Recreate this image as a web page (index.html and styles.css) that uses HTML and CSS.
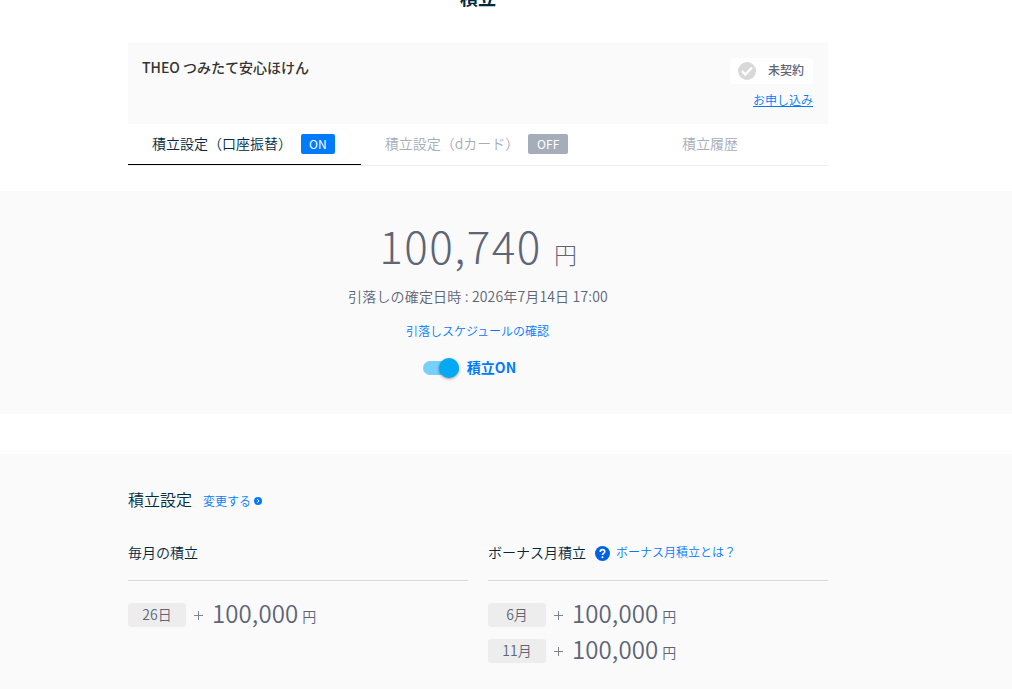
FILE: index.html
```html
<!DOCTYPE html>
<html lang="ja">
<head>
    <meta charset="UTF-8">
    <meta name="viewport" content="width=device-width, initial-scale=1.0">
    <title>積立</title>
    <link rel="stylesheet" href="styles.css">
</head>
<body>
    <header class="container">
        <h1 class="page-title">積立</h1>

        <section class="insurance">
            <h2 class="insurance-name">THEO つみたて安心ほけん</h2>
            <div class="insurance-status">
                <span class="status-box">
                    <svg class="status-icon" viewBox="0 0 18 18">
                        <circle cx="9" cy="9" r="9" fill="#d8d8d8"/>
                        <path d="M3.9 9.2l3.5 3.3 6.5-7" fill="none" stroke="#fff" stroke-width="2.3"/>
                    </svg>
                    <span class="status-text">未契約</span>
                </span>
                <a href="#" class="apply-link">お申し込み</a>
            </div>
        </section>

        <nav class="tabs">
            <a class="tab tab-active"><span>積立設定（口座振替）</span><span class="badge badge-on">ON</span></a>
            <a class="tab"><span>積立設定（dカード）</span><span class="badge">OFF</span></a>
            <a class="tab">積立履歴</a>
        </nav>
    </header>

    <section class="summary">
        <div class="container summary-inner">
            <p class="total"><span class="total-number">100,740</span><span class="total-unit">円</span></p>
            <p class="fixed-date">引落しの確定日時 : 2026年7月14日 17:00</p>
            <a class="schedule-link">引落しスケジュールの確認</a>
            <div class="switch">
                <span class="switch-track"><span class="switch-thumb"></span></span>
                <span class="switch-label">積立ON</span>
            </div>
        </div>
    </section>

    <section class="settings">
        <div class="container">
            <div class="settings-head">
                <h2 class="settings-title">積立設定</h2>
                <a class="change-link">変更する</a>
                <svg class="change-icon" viewBox="0 0 8 8">
                    <circle cx="4" cy="4" r="4" fill="#007bff"/>
                    <path d="M3.2 2.2L5 4 3.2 5.8" fill="none" stroke="#fff" stroke-width="1"/>
                </svg>
            </div>

            <div class="columns">
                <div class="column">
                    <div class="column-head">
                        <h3 class="column-title">毎月の積立</h3>
                    </div>
                    <div class="row">
                        <span class="day">26日</span>
                        <svg class="plus" viewBox="0 0 9 9"><path d="M0 4.5h9M4.5 0v9" stroke="#7c8391"/></svg>
                        <span class="amount">100,000</span>
                        <span class="unit">円</span>
                    </div>
                </div>

                <div class="column">
                    <div class="column-head">
                        <h3 class="column-title">ボーナス月積立</h3>
                        <svg class="help-icon" viewBox="0 0 15 15">
                            <circle cx="7.5" cy="7.5" r="7.5" fill="#0061e6"/>
                            <path d="M5.2 5.9C5.2 4.4 6.1 3.6 7.5 3.6S9.8 4.4 9.8 5.7C9.8 7.2 7.5 7.3 7.5 9.1" fill="none" stroke="#fff" stroke-width="1.6"/>
                            <circle cx="7.5" cy="11.3" r="1" fill="#fff"/>
                        </svg>
                        <a class="help-link">ボーナス月積立とは？</a>
                    </div>
                    <div class="row">
                        <span class="day">6月</span>
                        <svg class="plus" viewBox="0 0 9 9"><path d="M0 4.5h9M4.5 0v9" stroke="#7c8391"/></svg>
                        <span class="amount">100,000</span>
                        <span class="unit">円</span>
                    </div>
                    <div class="row">
                        <span class="day">11月</span>
                        <svg class="plus" viewBox="0 0 9 9"><path d="M0 4.5h9M4.5 0v9" stroke="#7c8391"/></svg>
                        <span class="amount">100,000</span>
                        <span class="unit">円</span>
                    </div>
                </div>
            </div>
        </div>
    </section>
</body>
</html>
```
FILE: styles.css
```css
* {
    box-sizing: border-box;
}

body {
    margin: 0;
    height: 689px;
    overflow: hidden;
    background-color: #fff;
    color: #5d6576;
    font-family: "Noto Sans CJK JP", sans-serif;
    font-size: 14px;
    font-weight: 350;
    line-height: 20px;
}

h1, h2, h3, p {
    margin: 0;
    font-weight: inherit;
}

.container {
    width: 700px;
    margin-left: 128px;
}

.page-title {
    height: 58px;
    margin-top: -15px;
    color: #002840;
    font-size: 18px;
    font-weight: 700;
    line-height: 24px;
    text-align: center;
}

/* insurance box */
.insurance {
    display: flex;
    justify-content: space-between;
    height: 81px;
    padding: 14px 15px 0 14px;
    background-color: #fafafa;
}

.insurance-name {
    color: #333;
    font-size: 14px;
    font-weight: 500;
}

.insurance-status {
    display: flex;
    flex-direction: column;
    align-items: flex-end;
    padding-top: 1px;
}

.status-box {
    display: flex;
    align-items: center;
    width: 83px;
    height: 26px;
    padding-left: 8px;
    border-radius: 4px;
    background-color: #fff;
}

.status-icon {
    width: 18px;
    height: 18px;
}

.status-text {
    margin-left: 12px;
    font-size: 12px;
    font-weight: 500;
    line-height: 22px;
    padding-bottom: 2px;
}

.apply-link {
    margin-top: 6px;
    color: #007bff;
    font-size: 12px;
    text-decoration: underline;
}

/* tabs */
.tabs {
    display: grid;
    grid-template-columns: 233px 234px 233px;
    height: 42px;
    border-bottom: 1px solid #eee;
}

.tab {
    display: flex;
    justify-content: center;
    height: 41px;
    padding: 9px 3px 0 0;
    color: #a6adba;
}

.tab-active {
    padding-right: 2px;
    border-bottom: 1px solid #000;
    color: #002840;
}

.badge {
    width: 40px;
    height: 20px;
    margin: 1px 0 0 9px;
    border-radius: 2px;
    background-color: #a6adba;
    color: #fff;
    font-size: 12px;
    font-weight: 400;
    line-height: 19px;
    letter-spacing: 0.2px;
    text-align: center;
}

.badge-on {
    width: 34px;
    background-color: #007bff;
}

/* summary */
.summary {
    height: 223px;
    margin-top: 25px;
    background-color: #fafafa;
}

.summary-inner {
    display: flex;
    flex-direction: column;
    align-items: center;
    padding-top: 30px;
}

.total {
    display: flex;
    align-items: baseline;
    height: 65px;
    line-height: 49px;
}

.total-number {
    font-size: 44px;
    font-weight: 300;
    letter-spacing: 1.5px;
}

.total-unit {
    margin-left: 12px;
    font-size: 23px;
    font-weight: 300;
}

.fixed-date {
    letter-spacing: 0.16px;
}

.schedule-link {
    margin-top: 15px;
    margin-right: 1px;
    color: #007bff;
    font-size: 12px;
}

.switch {
    display: flex;
    align-items: center;
    margin-top: 17px;
    margin-right: 17px;
}

.switch-track {
    display: flex;
    align-items: center;
    justify-content: flex-end;
    width: 36px;
    height: 14px;
    border-radius: 7px;
    background-color: #76d0f8;
}

.switch-thumb {
    width: 20px;
    height: 20px;
    border-radius: 50%;
    background-color: #03a9f4;
    box-shadow: 0 1px 3px rgba(0, 0, 0, 0.4);
}

.switch-label {
    margin-left: 8px;
    padding-bottom: 2px;
    color: #007bff;
    font-weight: 700;
    line-height: 18px;
}

/* settings */
.settings {
    height: 235px;
    margin-top: 40px;
    padding-top: 34px;
    background-color: #fafafa;
}

.settings-head {
    display: flex;
    height: 24px;
}

.settings-title {
    color: #002840;
    font-size: 16px;
    line-height: 22px;
}

.change-link {
    margin: 3px 0 0 11px;
    color: #007bff;
    font-size: 12px;
}

.change-icon {
    width: 8px;
    height: 8px;
    margin: 9px 0 0 3px;
}

.columns {
    display: grid;
    grid-template-columns: 340px 340px;
    gap: 20px;
    margin-top: 30px;
}

.column-head {
    display: flex;
    height: 39px;
    margin-bottom: 16px;
    border-bottom: 1px solid #d8d8d8;
}

.column-title {
    color: #002840;
    font-size: 14px;
}

.help-icon {
    width: 15px;
    height: 15px;
    margin: 4px 6px 0 9px;
}

.help-link {
    color: #007bff;
    font-size: 12px;
}

.row {
    display: flex;
    align-items: center;
    height: 36px;
}

.day {
    width: 58px;
    height: 24px;
    border-radius: 3px;
    background-color: #ededed;
    line-height: 23px;
    text-align: center;
}

.plus {
    width: 9px;
    height: 9px;
    margin: 0 9px 0 8px;
}

.amount {
    font-size: 24px;
    letter-spacing: 0.1px;
    padding-bottom: 4px;
}

.unit {
    margin: 2px 0 0 4px;
}
```
